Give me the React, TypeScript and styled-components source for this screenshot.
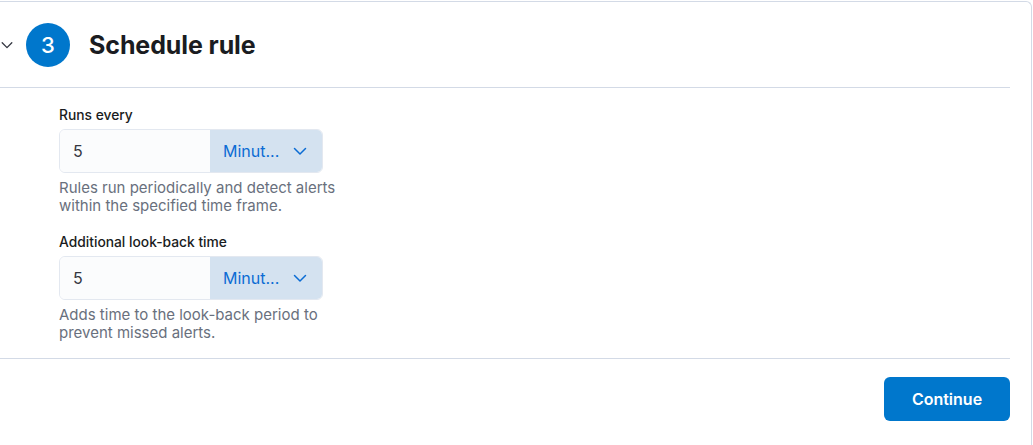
import React from "react"
import styled, { createGlobalStyle } from "styled-components"

const GlobalStyle = createGlobalStyle`
    html, body {
        margin: 0;
        padding: 0;
        background: #fff;
        font-family: Inter, "Noto Sans", sans-serif;
        color: #1a1c21;
    }
`;

const Card = styled.section`
    margin-top: 1px;
    width: 1032px;
    border-top: 1px solid #d3dae6;
    border-right: 1px solid #d3dae6;
    border-top-right-radius: 6px;
    box-sizing: border-box;
    padding-right: 21px;
`;

const Header = styled.header`
    display: flex;
    align-items: center;
    height: 85px;
    border-bottom: 1px solid #d3dae6;
`;

const Toggle = styled.button`
    display: flex;
    align-items: center;
    justify-content: center;
    width: 14px;
    padding: 0;
    margin-right: 12px;
    background: none;
    border: none;
    color: #343741;
`;

const StepNumber = styled.span`
    display: flex;
    align-items: center;
    justify-content: center;
    width: 44px;
    height: 44px;
    border-radius: 50%;
    background: #0077cc;
    color: #fff;
    font-size: 22px;
    font-weight: 500;
    margin-right: 19px;
`;

const Title = styled.h2`
    margin: 0;
    font-size: 25px;
    font-weight: 700;
    letter-spacing: -0.1px;
`;

const Body = styled.div`
    padding: 18px 0 16px 59px;
    border-bottom: 1px solid #d3dae6;
`;

const Field = styled.div<{ $gap?: number }>`
    width: 264px;
    margin-bottom: ${p => p.$gap ?? 0}px;
`;

const Label = styled.label`
    display: block;
    font-size: 13.8px;
    font-weight: 500;
    line-height: 18px;
    margin-bottom: 5px;
`;

const Group = styled.div`
    display: flex;
    height: 44px;
    border: 1px solid #e3e8f0;
    border-radius: 6px;
    overflow: hidden;
    box-sizing: border-box;
`;

const NumberInput = styled.input`
    width: 150px;
    min-width: 0;
    flex: 0 0 150px;
    box-sizing: border-box;
    border: none;
    background: #fbfcfd;
    padding: 0 13px;
    font: inherit;
    font-size: 16px;
    color: #343741;
    outline: none;
`;

const UnitSelect = styled.div`
    flex: 1;
    min-width: 0;
    display: flex;
    align-items: center;
    justify-content: space-between;
    padding: 0 14px 0 13px;
    background: #d4e2f0;
    color: #0b6cd4;
    font-size: 16px;
    white-space: nowrap;
`;

const Help = styled.p`
    margin: 6px 0 0;
    font-size: 15px;
    line-height: 18px;
    color: #69707d;
    white-space: nowrap;
`;

const Footer = styled.div`
    display: flex;
    justify-content: flex-end;
    padding: 18px 0 24px;
`;

const ContinueButton = styled.button`
    width: 126px;
    height: 44px;
    border: none;
    border-radius: 6px;
    background: #0077cc;
    color: #fff;
    font-family: inherit;
    font-size: 16px;
    font-weight: 600;
`;

const Chevron = ({ size, color }: { size: number; color: string }) => (
    <svg width={size} height={size} viewBox="0 0 16 16" fill="none">
        <path d="M2.5 5.5 8 11l5.5-5.5" stroke={color} strokeWidth="1.5" strokeLinecap="round" strokeLinejoin="round" />
    </svg>
);

const IntervalField = ({ label, help, gap }: { label: string; help: React.ReactNode; gap?: number }) => (
    <Field $gap={gap}>
        <Label>{label}</Label>
        <Group>
            <NumberInput defaultValue="5" />
            <UnitSelect>
                <span>Minut...</span>
                <Chevron size={16} color="#0b6cd4" />
            </UnitSelect>
        </Group>
        <Help>{help}</Help>
    </Field>
);

const App = () => {
    return (
        <>
            <GlobalStyle />
            <Card>
                <Header>
                    <Toggle aria-label="collapse">
                        <Chevron size={14} color="#343741" />
                    </Toggle>
                    <StepNumber>3</StepNumber>
                    <Title>Schedule rule</Title>
                </Header>
                <Body>
                    <IntervalField
                        label="Runs every"
                        help={<>Rules run periodically and detect alerts<br />within the specified time frame.</>}
                        gap={18}
                    />
                    <IntervalField
                        label="Additional look-back time"
                        help={<>Adds time to the look-back period to<br />prevent missed alerts.</>}
                    />
                </Body>
                <Footer>
                    <ContinueButton>Continue</ContinueButton>
                </Footer>
            </Card>
        </>
    )
}

export default App;
